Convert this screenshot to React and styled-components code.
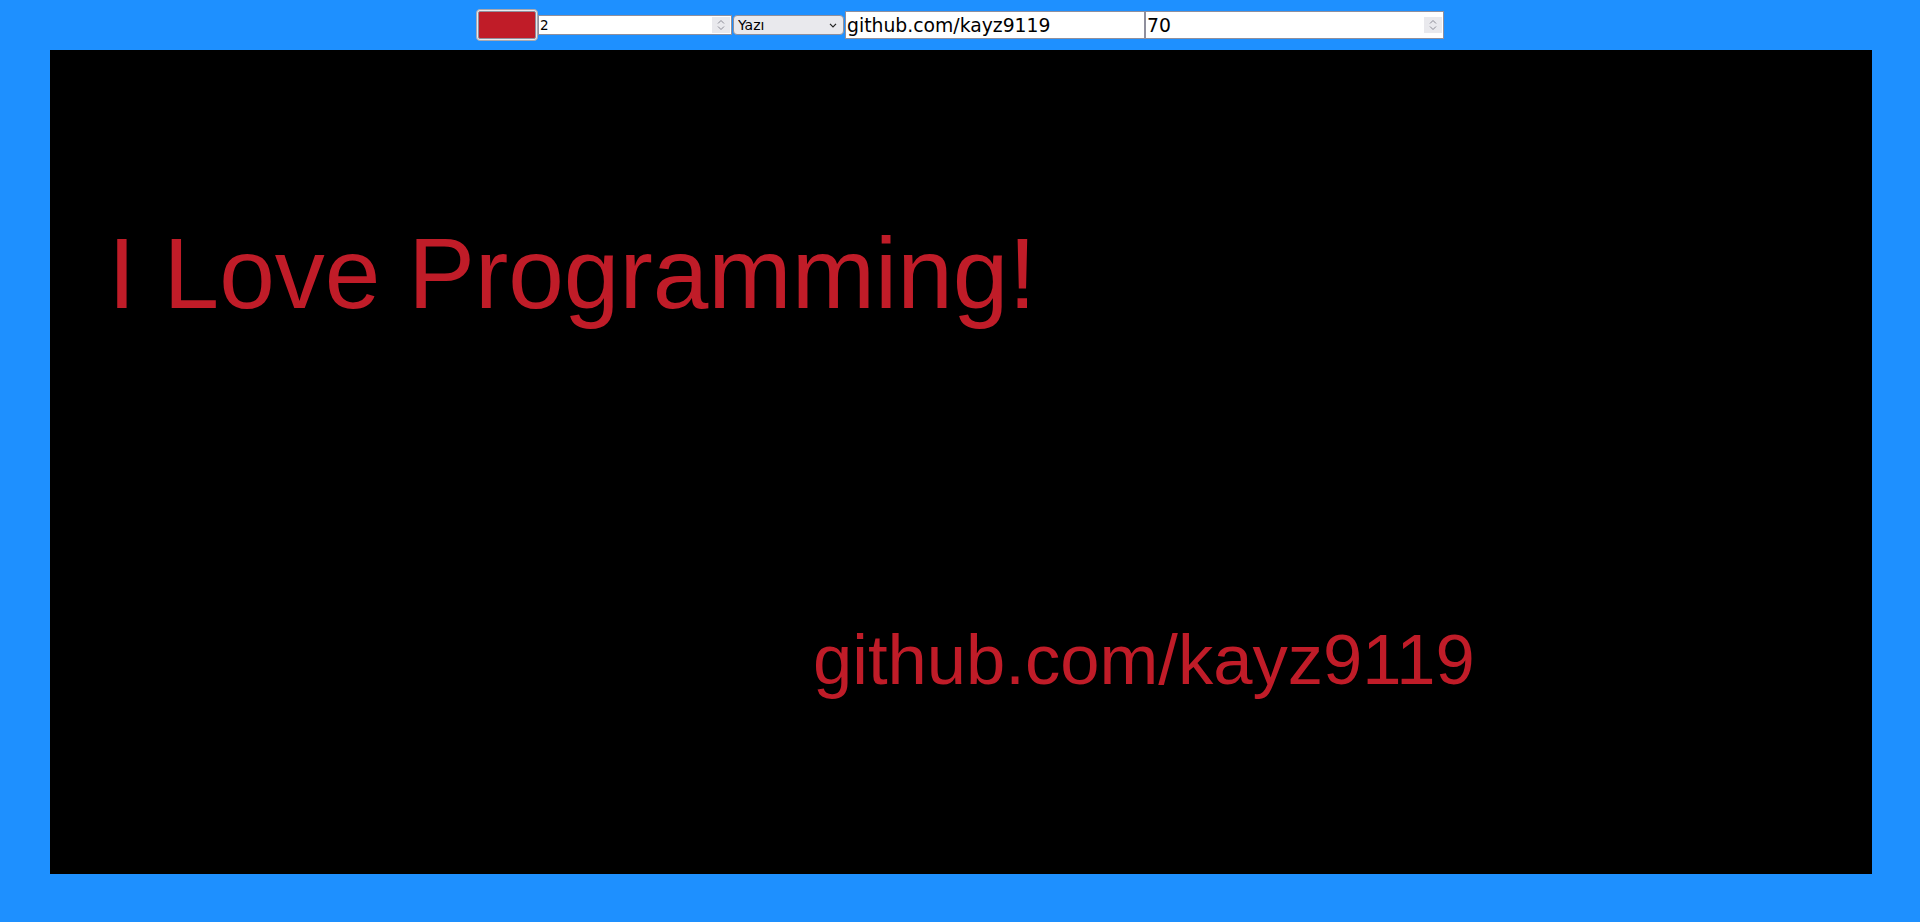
import React, { useState } from 'react'
import styled, { createGlobalStyle } from 'styled-components'

const GlobalStyle = createGlobalStyle`
    html, body {
        margin: 0;
        padding: 0;
        background: #1e90ff;
        overflow: hidden;
    }
    body {
        font-family: "DejaVu Sans", sans-serif;
    }
`

const Page = styled.div`
    width: 100vw;
    height: 100vh;
    display: flex;
    flex-direction: column;
    align-items: center;
`

const Toolbar = styled.div`
    height: 50px;
    display: flex;
    align-items: center;
    justify-content: center;
`

const ColorPicker = styled.input`
    width: 62px;
    height: 32px;
    margin: 0;
    padding: 1px;
    box-sizing: border-box;
    background: #e9e9ed;
    border: 1px solid #a8a8b0;
    border-radius: 4px;
    cursor: pointer;
    -webkit-appearance: none;
    appearance: none;
    &::-webkit-color-swatch-wrapper {
        padding: 0;
    }
    &::-webkit-color-swatch {
        border: 1px solid #8f8f9d;
        border-radius: 2px;
    }
`

const FieldBox = styled.div`
    width: ${p => p.$w}px;
    height: ${p => (p.$big ? 28 : 20)}px;
    box-sizing: border-box;
    display: flex;
    align-items: center;
    background: #fff;
    border: 1px solid #8f8f9d;
    padding-right: 1px;
`

const Field = styled.input`
    flex: 1;
    min-width: 0;
    height: 100%;
    margin: 0;
    border: none;
    outline: none;
    background: transparent;
    box-sizing: border-box;
    padding: 0 1px;
    font-family: "DejaVu Sans", sans-serif;
    font-size: ${p => (p.$big ? '18.8px' : '13.5px')};
    color: #000;
    -moz-appearance: textfield;
    &::-webkit-inner-spin-button,
    &::-webkit-outer-spin-button {
        -webkit-appearance: none;
        margin: 0;
    }
`

const Spinner = styled.div`
    width: 18px;
    height: 16px;
    background: #e9e9ed;
    display: flex;
    flex-direction: column;
    align-items: center;
    justify-content: center;
    gap: 2px;
    flex-shrink: 0;
`

const SelectBox = styled.div`
    width: 111px;
    height: 20px;
    margin: 0 1px;
    box-sizing: border-box;
    display: flex;
    align-items: center;
    background: #e9e9ed;
    border: 1px solid #8f8f9d;
    border-radius: 4px;
    padding-right: 6px;
`

const ModeSelect = styled.select`
    flex: 1;
    height: 100%;
    min-width: 0;
    border: none;
    outline: none;
    background: transparent;
    -webkit-appearance: none;
    appearance: none;
    padding: 0 0 0 4px;
    margin: 0;
    font-family: "DejaVu Sans", sans-serif;
    font-size: 14px;
    color: #000;
`

const Board = styled.div`
    position: relative;
    width: 1822px;
    height: 824px;
    margin-left: 2px;
    background: #000;
    overflow: hidden;
`

const Drawn = styled.span`
    position: absolute;
    font-family: "Liberation Sans", Arial, sans-serif;
    font-size: ${p => p.$size}px;
    line-height: 1;
    color: #c01c28;
    white-space: nowrap;
`

function SpinArrows() {
    return (
        <Spinner>
            <svg width="8" height="5" viewBox="0 0 8 5">
                <path d="M1 4.5 L4 1.5 L7 4.5" fill="none" stroke="#8a8a94" strokeWidth="1" />
            </svg>
            <svg width="8" height="5" viewBox="0 0 8 5">
                <path d="M1 0.5 L4 3.5 L7 0.5" fill="none" stroke="#8a8a94" strokeWidth="1" />
            </svg>
        </Spinner>
    )
}

export default function App() {
    const [color, setColor] = useState('#c01c28')
    const [width, setWidth] = useState(2)
    const [mode, setMode] = useState('text')
    const [text, setText] = useState('github.com/kayz9119')
    const [size, setSize] = useState(70)

    return (
        <Page>
            <GlobalStyle />
            <Toolbar>
                <ColorPicker type="color" value={color} onChange={e => setColor(e.target.value)} />
                <FieldBox $w={194}>
                    <Field type="number" value={width} onChange={e => setWidth(e.target.value)} />
                    <SpinArrows />
                </FieldBox>
                <SelectBox>
                    <ModeSelect value={mode} onChange={e => setMode(e.target.value)}>
                        <option value="text">Yazı</option>
                        <option value="pen">Kalem</option>
                        <option value="eraser">Silgi</option>
                    </ModeSelect>
                    <svg width="8" height="5" viewBox="0 0 8 5">
                        <path d="M1 0.8 L4 3.8 L7 0.8" fill="none" stroke="#222" strokeWidth="1.2" />
                    </svg>
                </SelectBox>
                <FieldBox $big $w={300}>
                    <Field type="text" $big value={text} onChange={e => setText(e.target.value)} />
                </FieldBox>
                <FieldBox $big $w={299}>
                    <Field type="number" $big value={size} onChange={e => setSize(e.target.value)} />
                    <SpinArrows />
                </FieldBox>
            </Toolbar>
            <Board>
                <Drawn $size={100} style={{ left: 58, top: 173 }}>I Love Programming!</Drawn>
                <Drawn $size={70.6} style={{ left: 763, top: 575 }}>github.com/kayz9119</Drawn>
            </Board>
        </Page>
    )
}
